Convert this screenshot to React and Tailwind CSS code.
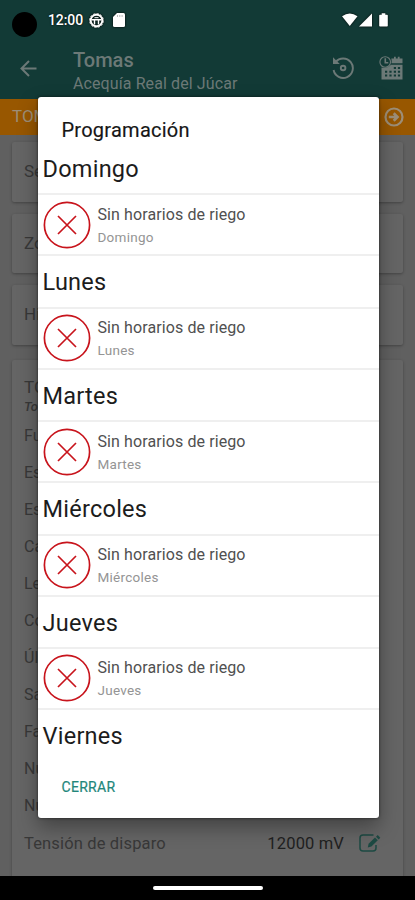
import React from "react";

const days = ["Domingo", "Lunes", "Martes", "Miércoles", "Jueves"];

const filters = ["Se", "Zo", "Hi"];

const details = ["Fu", "Es", "Es", "Ca", "Le", "Co", "Úl", "Sa", "Fa", "Nú", "Nú"];

const StatusBar = () => (
  <div className="flex h-[40px] items-center pl-[12px] pr-[26px] text-white">
    <span className="mt-[9px] size-[25px] rounded-full bg-black"></span>
    <span className="ml-[11px] w-[36px] whitespace-nowrap text-[14px] leading-[20px] font-medium tracking-[-0.1px] [text-shadow:0_0_2px_#000]">
      12:00
    </span>
    <svg className="ml-[5px] size-[15px] drop-shadow-[0_0_1px_#000]" viewBox="0 0 15 15" fill="none" stroke="currentColor">
      <circle cx="7.5" cy="7.5" r="5.8" strokeWidth="1.9" />
      <circle cx="7.5" cy="7.5" r="6.9" strokeWidth="0.9" strokeDasharray="2.4 1.2" />
      <path d="M2.5 6.7h10M5.5 7v4.5M9.5 7v4.5" strokeWidth="1.4" />
      <path d="M5.5 4.7h4" strokeWidth="1" />
    </svg>
    <svg className="ml-[9px] h-[14px] w-[12px] drop-shadow-[0_0_1px_#000]" viewBox="0 0 12 14" fill="currentColor">
      <path d="M4 0h6.5Q12 0 12 1.5v11q0 1.5-1.5 1.5h-9Q0 14 0 12.5V4z" />
      <path d="M4.5 2v2M6.8 2v2M9.1 2v2" stroke="#aaa" strokeWidth="0.8" />
    </svg>
    <div className="ml-auto flex items-center drop-shadow-[0_0_1px_#000]">
      <svg className="h-[14px] w-[47px]" viewBox="0 0 47 14" fill="currentColor">
        <path d="M0 3.2Q7.7-2.2 15.5 3.2L7.75 13z" />
        <path d="M17 13.5 30 .5v13z" />
        <path d="M38 1.8h1.7V.2h3.6v1.6H45q.8 0 .8.8v10.1q0 .8-.8.8h-7q-.8 0-.8-.8V2.6q0-.8.8-.8z" />
      </svg>
    </div>
  </div>
);

const Toolbar = () => (
  <div className="flex h-[59px] items-start pl-[20px] pr-[12px] text-[#6c7977]">
    <svg className="mt-[20px] size-[17px]" viewBox="0 0 17 17" fill="none" stroke="currentColor" strokeWidth="2">
      <path d="M16.5 8.5H2M9 1 1.5 8.5 9 16" />
    </svg>
    <div className="ml-[36px] mt-[7px] whitespace-nowrap">
      <div className="text-[20px] leading-[26px] font-medium">Tomas</div>
      <div className="mt-px text-[16px] leading-[20px] tracking-[0.1px]">Acequía Real del Júcar</div>
    </div>
    <svg className="ml-auto mt-[16px] size-[24px]" viewBox="0 0 24 24" fill="none" stroke="currentColor" strokeWidth="1.9">
      <path d="M4.5 6.2A9.7 9.7 0 1 1 2.6 14" />
      <path d="M2 1.2v6.8h6.8z" fill="currentColor" stroke="none" />
      <circle cx="12.1" cy="12" r="2.3" />
    </svg>
    <svg className="ml-[24px] mt-[16px] h-[24px] w-[24px]" viewBox="0 0 24 24" fill="currentColor">
      <path d="M12.3 2.5H15V.8h1.8v1.7h2V.8h1.8v1.7h2.9v4.8h-11q.5-2.5-.2-4.800zM2.5 11.5q5.5 2 9.5-2.700h11.5V23.5h-21z" />
      <circle cx="6.2" cy="6" r="5.3" fill="none" stroke="currentColor" strokeWidth="1.1" />
      <path d="M6.3 2.2v4.5h3" fill="none" stroke="currentColor" strokeWidth="1.6" />
      <path d="M6 15.800h2.2M10.4 15.800h2.2M14.8 15.800H17M18.9 15.800h2.200M6 19.500h2.200M10.400 19.500h2.200M14.800 19.500H17M18.900 19.500h2.200M14.800 12H17M18.900 12h2.200" stroke="#123a36" strokeWidth="2.1" />
    </svg>
  </div>
);

const CancelIcon = () => (
  <svg className="size-[48px] shrink-0" viewBox="0 0 48 48" fill="none" stroke="#c8141c">
    <circle cx="24" cy="24" r="22.6" strokeWidth="1.7" />
    <path d="m15 15 18 18M33 15 15 33" strokeWidth="1.7" />
  </svg>
);

const DayTitle = ({ name }) => (
  <h3 className="h-[50.4px] pl-[5px] text-[23.5px] leading-[53px] tracking-[0.25px] text-[#1c1c1c]">{name}</h3>
);

const DayRow = ({ name }) => (
  <div className="flex h-[63px] items-center border-y-2 border-[#efefef] pl-[5.5px]">
    <CancelIcon />
    <div className="ml-[6.5px] whitespace-nowrap pt-[2px]">
      <div className="text-[16px] leading-[22px] tracking-[0.1px] text-[#505050]">Sin horarios de riego</div>
      <div className="text-[13.5px] leading-[22px] tracking-[0.25px] text-[#949494]">{name}</div>
    </div>
  </div>
);

const ScheduleDialog = () => (
  <div className="absolute left-[37.5px] top-[97px] flex h-[721px] w-[341px] flex-col overflow-hidden rounded-[3px] bg-white shadow-[0_0_3px_rgba(0,0,0,0.6),0_9px_20px_rgba(0,0,0,0.35)]">
    <h2 className="h-[46px] shrink-0 pl-[24px] pt-[21px] text-[20px] leading-[25px] tracking-[0.25px] text-[#161616] [-webkit-text-stroke:0.15px_#161616]">
      Programación
    </h2>
    <div className="h-[618px] shrink-0 overflow-hidden">
      {days.map((day) => (
        <section key={day} className="h-[113.4px]">
          <DayTitle name={day} />
          <DayRow name={day} />
        </section>
      ))}
      <DayTitle name="Viernes" />
    </div>
    <button className="ml-[24px] mt-[16px] self-start text-[14px] leading-[20px] tracking-[0.3px] text-[#23877b] [-webkit-text-stroke:0.2px_#23877b]">
      CERRAR
    </button>
  </div>
);

const App = () => (
  <div className="relative flex h-[900px] w-[415px] flex-col overflow-hidden bg-[#606060] font-[Roboto,sans-serif] text-[#383838]">
    <header className="h-[99px] shrink-0 bg-[#123a36]">
      <StatusBar />
      <Toolbar />
    </header>

    <div className="flex h-[36px] shrink-0 items-center justify-between bg-[#985700] pl-[12px] pr-[11px] text-[#9d8e77]">
      <span className="text-[17px]">TOM</span>
      <svg className="size-[20px]" viewBox="0 0 20 20" fill="none" stroke="currentColor">
        <circle cx="10" cy="10" r="8.5" strokeWidth="2.2" />
        <path d="M4.8 10h8M9.7 6.2 13.5 10l-3.8 3.8" strokeWidth="2.7" />
      </svg>
    </div>

    <main className="flex h-[741px] shrink-0 flex-col gap-[12px] overflow-hidden px-[12px] pt-[7px]">
      {filters.map((label) => (
        <div key={label} className="flex h-[59.5px] shrink-0 items-center rounded-[2px] bg-[#656565] pl-[12px] text-[17px] shadow-[0_1px_3px_rgba(0,0,0,0.3)]">
          {label}
        </div>
      ))}
      <div className="mt-[3px] h-[560px] shrink-0 rounded-[2px] bg-[#656565] pl-[12px] pr-[22px] pt-[15px] shadow-[0_1px_3px_rgba(0,0,0,0.3)]">
        <div className="text-[17px] leading-[24px]">TO</div>
        <div className="h-[19px] text-[13px] leading-[15px] font-medium italic">To</div>
        {details.map((label, i) => (
          <div key={i} className="flex h-[37px] items-center text-[16px]">
            {label}
          </div>
        ))}
        <div className="flex h-[37px] items-center pt-[2px] text-[16.5px] tracking-[0.15px]">
          <span>Tensión de disparo</span>
          <span className="ml-auto text-[#1f1f1f]">12000 mV</span>
          <svg className="ml-[15px] size-[22px]" viewBox="0 0 22 22" fill="none" stroke="#1d4a43" strokeWidth="1.5">
            <path d="M14.5 2H4Q1 2 1 5v10q0 3 3 3h10q3 0 3-3v-3" />
            <path d="m8.800 14.500.8-3.800 6.400-6.200 2.800 2.800-6.400 6.200z" fill="#1d4a43" stroke="none" />
            <path d="m17 3.700 1.700-1.600 2.600 2.600-1.600 1.700z" fill="#1d4a43" stroke="none" />
          </svg>
        </div>
      </div>
    </main>

    <footer className="flex h-[24px] shrink-0 items-center justify-center bg-black">
      <span className="h-[4px] w-[110px] rounded-full bg-white"></span>
    </footer>

    <ScheduleDialog />
  </div>
);

export default App;
